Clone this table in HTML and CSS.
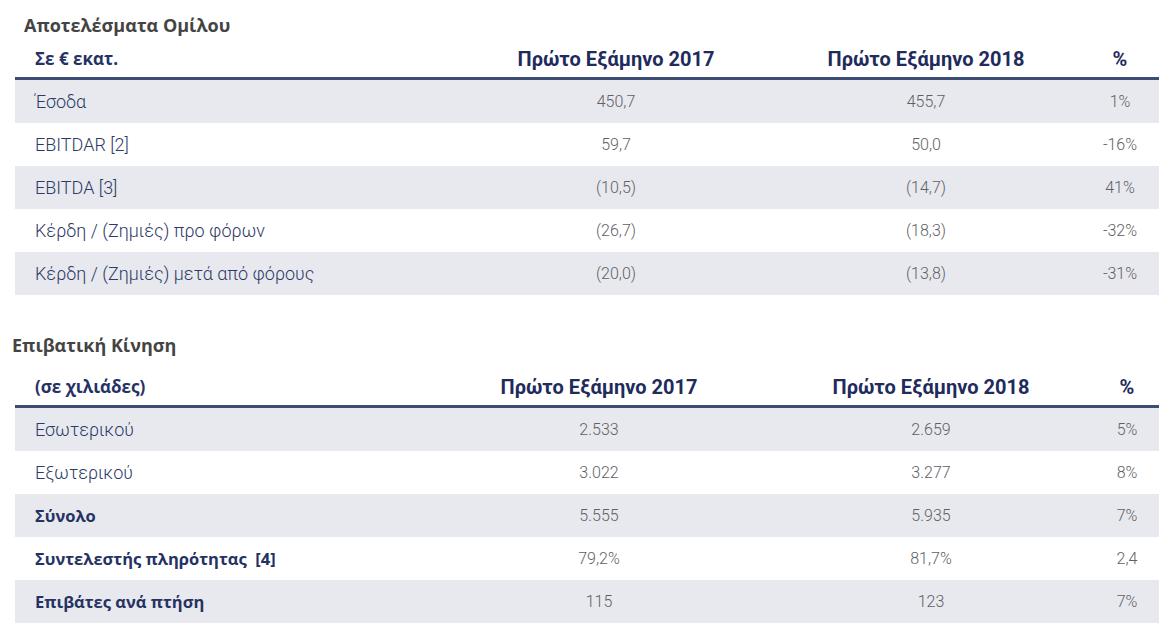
FILE: index.html
```html
<!DOCTYPE html>
<html lang="el">
<head>
<meta charset="utf-8">
<title>Αποτελέσματα</title>
<link rel="stylesheet" href="styles.css">
</head>
<body>
<section class="block block-results">
  <h2 class="title title-first">Αποτελέσματα Ομίλου</h2>
  <div class="table t1">
    <div class="row head">
      <div class="cell label">Σε € εκατ.</div>
      <div class="cell col">Πρώτο Εξάμηνο 2017</div>
      <div class="cell col">Πρώτο Εξάμηνο 2018</div>
      <div class="cell col">%</div>
    </div>
    <div class="row grey"><div class="cell label">Έσοδα</div><div class="cell num">450,7</div><div class="cell num">455,7</div><div class="cell num">1%</div></div>
    <div class="row"><div class="cell label">EBITDAR [2]</div><div class="cell num">59,7</div><div class="cell num">50,0</div><div class="cell num">-16%</div></div>
    <div class="row grey"><div class="cell label">EBITDA [3]</div><div class="cell num">(10,5)</div><div class="cell num">(14,7)</div><div class="cell num">41%</div></div>
    <div class="row"><div class="cell label">Κέρδη / (Ζημιές) προ φόρων</div><div class="cell num">(26,7)</div><div class="cell num">(18,3)</div><div class="cell num">-32%</div></div>
    <div class="row grey"><div class="cell label">Κέρδη / (Ζημιές) μετά από φόρους</div><div class="cell num">(20,0)</div><div class="cell num">(13,8)</div><div class="cell num">-31%</div></div>
  </div>
</section>
<section class="block block-traffic">
  <h2 class="title title-second">Επιβατική Κίνηση</h2>
  <div class="table t2">
    <div class="row head">
      <div class="cell label">(σε χιλιάδες)</div>
      <div class="cell col">Πρώτο Εξάμηνο 2017</div>
      <div class="cell col">Πρώτο Εξάμηνο 2018</div>
      <div class="cell col">%</div>
    </div>
    <div class="row grey"><div class="cell label">Εσωτερικού</div><div class="cell num">2.533</div><div class="cell num">2.659</div><div class="cell num">5%</div></div>
    <div class="row"><div class="cell label">Εξωτερικού</div><div class="cell num">3.022</div><div class="cell num">3.277</div><div class="cell num">8%</div></div>
    <div class="row grey"><div class="cell label strong">Σύνολο</div><div class="cell num">5.555</div><div class="cell num">5.935</div><div class="cell num">7%</div></div>
    <div class="row"><div class="cell label strong">Συντελεστής πληρότητας&nbsp; [4]</div><div class="cell num">79,2%</div><div class="cell num">81,7%</div><div class="cell num">2,4</div></div>
    <div class="row grey"><div class="cell label strong">Επιβάτες ανά πτήση</div><div class="cell num">115</div><div class="cell num">123</div><div class="cell num">7%</div></div>
  </div>
</section>
</body>
</html>
```

FILE: styles.css
```css
html, body {
  margin: 0;
  padding: 0;
  background: #ffffff;
}

body {
  font-family: Roboto, "Noto Sans", sans-serif;
}

.block {
  margin-left: 15px;
  width: 1144px;
}

.block-results {
  padding-top: 12px;
}

.block-traffic {
  margin-top: 37px;
}

.title {
  margin: 0;
  font-family: "Open Sans", "Noto Sans", sans-serif;
  font-weight: 700;
  font-size: 18px;
  line-height: 26px;
  color: #444444;
}

.title-first {
  padding-left: 9px;
}

.title-second {
  margin-left: -3px;
}

.row {
  display: grid;
  height: 43px;
  align-items: center;
}

.t1 .row {
  grid-template-columns: 446px 310px 310px 78px;
}

.t2 .row {
  grid-template-columns: 416px 336px 328px 64px;
}

.row.grey {
  background: #e8e9ee;
}

.row.head {
  align-items: end;
  padding-bottom: 7px;
  box-sizing: border-box;
  border-bottom: 3px solid #3c4c72;
}

.t1 .row.head {
  height: 42px;
}

.t2 .row.head {
  height: 50px;
}

.cell {
  font-size: 18px;
  line-height: 22px;
  white-space: nowrap;
}

.label {
  padding-left: 20px;
  font-weight: 300;
  color: #2d3966;
}

.head .label {
  font-family: "Open Sans", "Noto Sans", sans-serif;
  font-weight: 700;
  font-size: 17px;
  color: #253263;
}

.label.strong {
  font-family: "Open Sans", "Noto Sans", sans-serif;
  font-weight: 700;
  font-size: 16.5px;
  color: #253263;
}

.col {
  text-align: center;
  font-weight: 700;
  font-size: 20px;
  color: #1f2b5c;
}

.num {
  text-align: center;
  font-weight: 300;
  font-size: 16px;
  color: #5f6066;
}
```
